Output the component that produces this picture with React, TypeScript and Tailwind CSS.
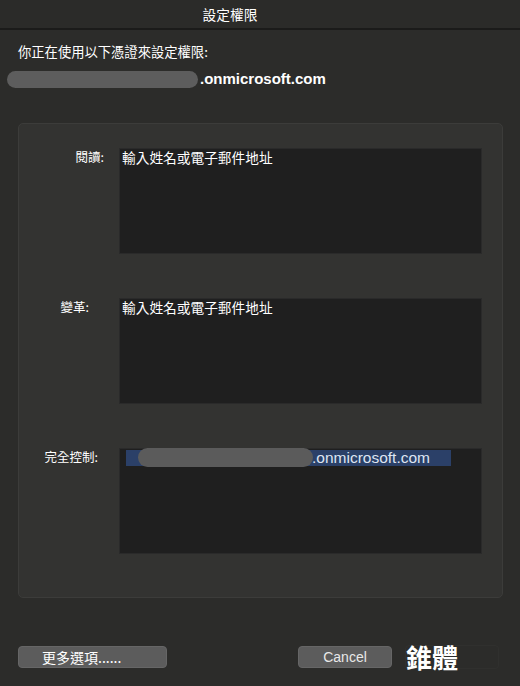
import React from 'react';

const CJK = "font-['Noto_Sans_CJK_TC','Noto_Sans',sans-serif]";
const LATIN = "font-['Liberation_Sans','Noto_Sans_CJK_TC',sans-serif]";

interface FieldProps {
  label: string;
  labelPad: string;
  children?: React.ReactNode;
}

function Field({ label, labelPad, children }: FieldProps) {
  return (
    <div className="flex">
      <div className={`w-[100px] shrink-0 text-right text-[12.5px] leading-[16px] pt-[1px] text-white ${labelPad}`}>
        {label}
      </div>
      <div className="h-[106px] flex-1 bg-[#1f1f1f] border border-[#2a2a2a]">{children}</div>
    </div>
  );
}

function Placeholder() {
  return <div className="pl-[2px] text-[13.7px] leading-[16px] text-white">輸入姓名或電子郵件地址</div>;
}

export default function App() {
  return (
    <div className={`w-[520px] h-[686px] bg-[#2c2c2a] flex flex-col ${CJK}`}>
      {/* title bar */}
      <div className="h-[30px] shrink-0 flex items-center justify-center pr-[60px] border-b-2 border-[#1b1b1a] bg-[#2b2b29]">
        <span className="text-[13.7px] text-white">設定權限</span>
      </div>

      <div className="flex flex-col">
        <div className="mt-[13px] pl-[18px] text-[13.3px] leading-[18px] text-white">你正在使用以下憑證來設定權限:</div>
        <div className="mt-[9px] pl-[7px] flex items-center h-[18px]">
          <div className="w-[191px] h-[17px] rounded-full bg-[#5d5d5d]" />
          <span className={`ml-[2px] text-[15px] font-bold text-white ${LATIN}`}>.onmicrosoft.com</span>
        </div>

        {/* permissions panel */}
        <div className="mt-[35px] ml-[18px] mr-[17px] h-[475px] rounded-[5px] border border-[#3c3c3a] bg-[#333331] pt-[24px] pr-[20px] flex flex-col gap-[44px]">
          <Field label="閱讀:" labelPad="pr-[15px]">
            <Placeholder />
          </Field>
          <Field label="變革:" labelPad="pr-[30px]">
            <Placeholder />
          </Field>
          <Field label="完全控制:" labelPad="pr-[21px]">
            <div className="ml-[6px] mt-[1px] w-[325px] h-[16px] bg-[#2b4068] flex items-center relative">
              <div className="absolute left-[12px] -top-[2px] w-[175px] h-[19px] rounded-full bg-[#5b5b5b]" />
              <span className={`ml-[186px] text-[15.5px] leading-[16px] text-[#dfe5f2] ${LATIN}`}>.onmicrosoft.com</span>
            </div>
          </Field>
        </div>

        {/* footer buttons */}
        <div className="mt-[47px] pl-[18px] flex items-center h-[24px]">
          <button className="w-[149px] h-[22px] rounded-[4px] bg-[#5c5c5c] border border-[#666] text-left pl-[23px] text-[14px] text-white leading-none">
            更多選項......
          </button>
          <button className={`ml-[131px] w-[94px] h-[22px] rounded-[4px] bg-[#5c5c5c] border border-[#666] text-[14px] text-[#e8e8e8] leading-none ${LATIN}`}>
            Cancel
          </button>
          <div className="ml-[13px] w-[94px] h-[24px] rounded-[4px] border border-[#30302e] flex items-center">
            <span className="text-[26px] font-bold text-white leading-none">錐體</span>
          </div>
        </div>
      </div>
    </div>
  );
}
